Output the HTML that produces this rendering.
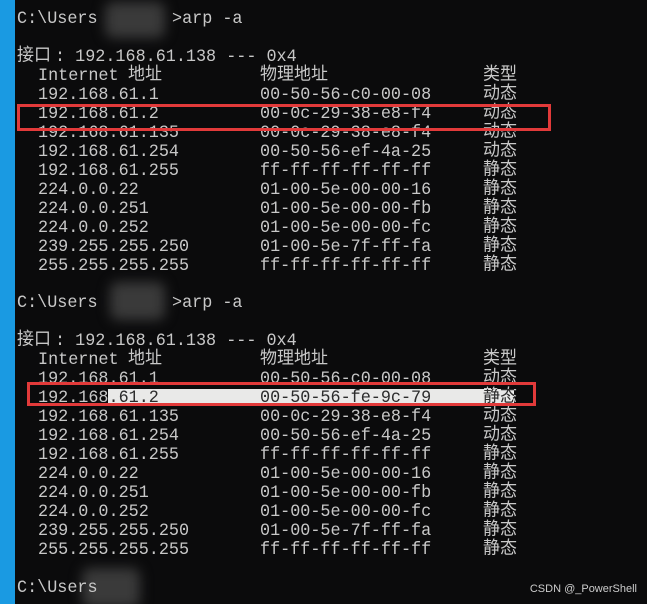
<!DOCTYPE html>
<html><head><meta charset="utf-8">
<style>
html,body{margin:0;padding:0;background:#0c0c0c;}
#s{position:relative;width:647px;height:604px;overflow:hidden;background:#0b0b0c;}
.bl{position:absolute;left:0;top:0;width:15px;height:604px;background:#1a9ae2;}
.t{position:absolute;font-family:"Liberation Mono","Noto Sans CJK SC",monospace;font-size:16.8px;line-height:19px;color:#c8c8c8;white-space:pre;transform:scaleY(1.05);}
.c{font-family:"Noto Sans CJK SC",sans-serif;font-size:17px;line-height:17px;}
.box{position:absolute;border:3px solid #e23a3a;box-sizing:border-box;}
.blur{position:absolute;background:#3a3a3a;filter:blur(6px);border-radius:8px;}
.w{position:absolute;background:#f4f4f4;mix-blend-mode:difference;}
.wm{position:absolute;right:10px;top:583px;font-family:"Liberation Sans",sans-serif;font-size:11px;color:#ccc;}
</style></head><body><div id="s">
<div class="bl"></div>
<div class="blur" style="left:105px;top:2px;width:60px;height:36px"></div>
<div class="blur" style="left:110px;top:282px;width:55px;height:38px"></div>
<div class="blur" style="left:82px;top:568px;width:58px;height:40px"></div>
<div id="lines"></div>
<div class="w" style="left:108px;top:389px;width:406px;height:15px"></div>
<div class="wm">CSDN @_PowerShell</div>
<div class="box" style="left:17px;top:104px;width:534px;height:27px"></div>
<div class="box" style="left:27px;top:382px;width:509px;height:24px"></div>
</div>
<script>
var L=document.getElementById('lines');
function add(x,y,txt,cls){var d=document.createElement('div');d.className='t'+(cls?' '+cls:'');d.style.left=x+'px';d.style.top=(cls?(y-12):(y-8))+'px';d.textContent=txt;L.appendChild(d);}
function table(y0,second){
 add(17,y0,'C:\\Users');add(172,y0,'>arp -a');
 add(17,y0+38,'接口',"c");add(55,y0+38,': 192.168.61.138 --- 0x4');
 add(38,y0+57,'Internet');add(128,y0+57,'地址','c');add(260,y0+57,'物理地址','c');add(483,y0+57,'类型','c');
 var rows=second?[
 ['192.168.61.1','00-50-56-c0-00-08','动态'],['192.168.61.2','00-50-56-fe-9c-79','静态'],['192.168.61.135','00-0c-29-38-e8-f4','动态'],
 ['192.168.61.254','00-50-56-ef-4a-25','动态'],['192.168.61.255','ff-ff-ff-ff-ff-ff','静态'],['224.0.0.22','01-00-5e-00-00-16','静态'],
 ['224.0.0.251','01-00-5e-00-00-fb','静态'],['224.0.0.252','01-00-5e-00-00-fc','静态'],['239.255.255.250','01-00-5e-7f-ff-fa','静态'],['255.255.255.255','ff-ff-ff-ff-ff-ff','静态']]:[
 ['192.168.61.1','00-50-56-c0-00-08','动态'],['192.168.61.2','00-0c-29-38-e8-f4','动态'],['192.168.61.135','00-0c-29-38-e8-f4','动态'],
 ['192.168.61.254','00-50-56-ef-4a-25','动态'],['192.168.61.255','ff-ff-ff-ff-ff-ff','静态'],['224.0.0.22','01-00-5e-00-00-16','静态'],
 ['224.0.0.251','01-00-5e-00-00-fb','静态'],['224.0.0.252','01-00-5e-00-00-fc','静态'],['239.255.255.250','01-00-5e-7f-ff-fa','静态'],['255.255.255.255','ff-ff-ff-ff-ff-ff','静态']];
 for(var i=0;i<rows.length;i++){var y=y0+76+19*i;
  add(38,y,rows[i][0]);add(260,y,rows[i][1]);add(483,y,rows[i][2],'c');}
}
table(18,false);table(302,true);
add(17,587,'C:\\Users');
</script>
</body></html>
